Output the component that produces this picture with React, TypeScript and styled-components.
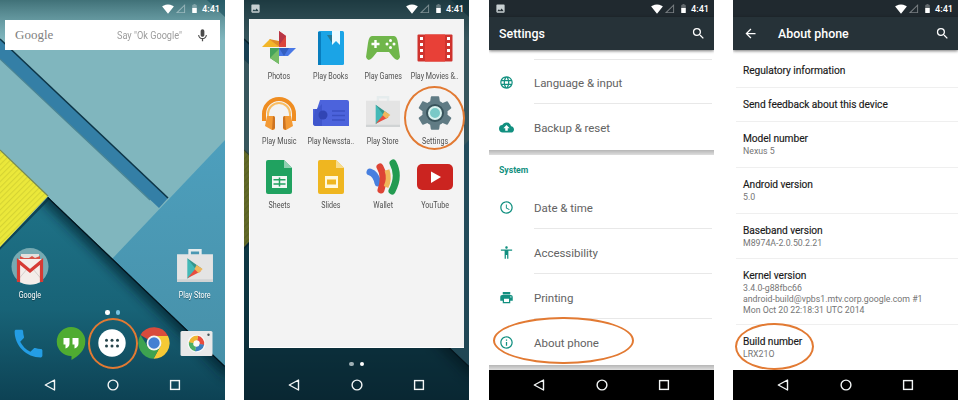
import React from "react";
import styled, { createGlobalStyle } from "styled-components";
import {
  MdSearch, MdLanguage, MdBackup, MdAccessTime, MdAccessibility, MdPrint,
  MdInfoOutline, MdArrowBack, MdSignalWifi4Bar, MdSignalCellularNull,
  MdBattery60, MdPhoto, MdMic, MdSettings, MdPhone,
} from "react-icons/md";

const Global = createGlobalStyle`
  * { box-sizing: border-box; }
  body { margin: 0; background: #fff; font-family: Roboto, "Liberation Sans", sans-serif; }
  svg { display: block; }
`;

const Page = styled.main`
  display: grid;
  grid-template-columns: 244px 245px 244px 225px;
  width: 960px;
  height: 400px;
  overflow: hidden;
`;

const Screen = styled.section<{ $bg?: string }>`
  position: relative;
  isolation: isolate;
  display: flex;
  flex-direction: column;
  width: 225px;
  height: 400px;
  overflow: hidden;
  background: ${(p) => p.$bg || "#fff"};
`;

const Backdrop = styled.svg`
  position: absolute;
  inset: 0;
  z-index: -1;
`;

const Ring = styled.div<{ $x: number; $y: number; $w: number; $h: number }>`
  position: absolute;
  left: ${(p) => p.$x}px;
  top: ${(p) => p.$y}px;
  width: ${(p) => p.$w}px;
  height: ${(p) => p.$h}px;
  border: 2px solid #e27a33;
  border-radius: 50%;
`;

const StatusRow = styled.header<{ $bg?: string }>`
  flex: none;
  display: flex;
  align-items: center;
  height: 17px;
  padding: 0 5px 0 6px;
  color: #fff;
  background: ${(p) => p.$bg || "transparent"};
`;
const StatusIcons = styled.div`
  display: flex;
  align-items: center;
  margin-left: auto;
`;
const Faint = styled.span`
  opacity: 0.4;
  margin: 0 3px 0 1px;
`;
const Clock = styled.span`
  margin-left: 2px;
  font-size: 9.2px;
  line-height: 17px;
  font-weight: 500;
  width: 18px;
  text-align: right;
  white-space: nowrap;
`;

function Status({ bg, photo }: { bg?: string; photo?: boolean }) {
  return (
    <StatusRow $bg={bg}>
      {photo && <MdPhoto size={11} color="#c8d0d2" />}
      <StatusIcons>
        <MdSignalWifi4Bar size={12} />
        <Faint><MdSignalCellularNull size={11} /></Faint>
        <MdBattery60 size={11} />
        <Clock>4:41</Clock>
      </StatusIcons>
    </StatusRow>
  );
}

const NavRow = styled.nav<{ $bg?: string }>`
  flex: none;
  display: grid;
  grid-template-columns: repeat(3, 62.5px);
  justify-content: center;
  justify-items: center;
  align-items: center;
  height: 30px;
  margin-top: auto;
  background: ${(p) => p.$bg || "transparent"};
`;

function Nav({ bg }: { bg?: string }) {
  const line = { fill: "none", stroke: "#f3f6f6", strokeWidth: 1.4 };
  return (
    <NavRow $bg={bg}>
      <svg width="14" height="14"><path d="M11.5 2v10L2.3 7z" {...line} strokeLinejoin="round" /></svg>
      <svg width="14" height="14"><circle cx="7" cy="7" r="4.9" {...line} /></svg>
      <svg width="14" height="14"><rect x="2.6" y="2.6" width="8.8" height="8.8" {...line} /></svg>
    </NavRow>
  );
}

function Wallpaper({ dim }: { dim?: boolean }) {
  const id = dim ? "b" : "a";
  return (
    <Backdrop width="225" height="400" viewBox="0 0 225 400">
      <defs>
        <linearGradient id={"top" + id} x1="0" y1="0" x2="0" y2="1">
          <stop offset="0" stopColor="#123f45" stopOpacity=".58" />
          <stop offset="1" stopColor="#315f64" stopOpacity="0" />
        </linearGradient>
        <linearGradient id={"deep" + id} x1="0" y1="0" x2="0" y2="1">
          <stop offset="0" stopColor="#1f7388" />
          <stop offset=".55" stopColor="#186377" />
          <stop offset="1" stopColor="#0d4254" />
        </linearGradient>
        <linearGradient id={"blue" + id} x1="0" y1="0" x2="0" y2="1">
          <stop offset="0" stopColor="#4d9fbd" />
          <stop offset="1" stopColor="#4790a8" />
        </linearGradient>
        <pattern id={"stripe" + id} width="4" height="4" patternUnits="userSpaceOnUse" patternTransform="rotate(-45)">
          <rect width="4" height="4" fill="#ebe83a" />
          <rect width="4" height="1.1" fill="#d6d433" />
        </pattern>
        <filter id={"soft" + id} x="-20%" y="-20%" width="140%" height="140%">
          <feGaussianBlur stdDeviation="6" />
        </filter>
        <clipPath id={"lower" + id}><path d="M0 247L48 197L225 366V400H0z" /></clipPath>
      </defs>
      <rect width="225" height="400" fill="#80b6be" />
      <path d="M0 39L168 198L159 208L0 59z" fill="#347fa6" />
      <path d="M0 59L150 200" stroke="#4a8494" strokeWidth="1.2" />
      <path d="M0 39L168 198" stroke="#0d3547" strokeWidth="1.6" />
      <path d="M225 140V368L112 259z" fill={`url(#blue${id})`} />
      <path d="M0 247L48 197L225 366V400H0z" fill={`url(#deep${id})`} />
      <g clipPath={`url(#lower${id})`}>
        <path d="M44 193L232 373" stroke="#021c28" strokeWidth="14" opacity=".75" filter={`url(#soft${id})`} />
        <path d="M-4 251L50 196" stroke="#0a3340" strokeWidth="4" opacity=".7" />
        <path d="M48 197L225 366" stroke="#04141c" strokeWidth="2.4" />
      </g>
      <path d="M0 150L48 196L0 247z" fill={`url(#stripe${id})`} />
      <path d="M0 150L48 196" stroke="#788b52" strokeWidth="1.2" />
      <rect width="225" height="40" fill={`url(#top${id})`} />
      <path d="M207 0H225V17z" fill="#174d5b" opacity=".6" />
      {dim && <rect width="225" height="400" fill="#06151c" opacity=".6" />}
    </Backdrop>
  );
}

/* Home screen */
const SearchWidget = styled.div`
  flex: none;
  display: flex;
  align-items: center;
  height: 30px;
  margin: 3px 5px 0;
  padding: 0 10px;
  background: #fff;
`;
const Wordmark = styled.span`
  width: 39px;
  font: 13px "Liberation Serif", serif;
  color: #808080;
`;
const Hint = styled.span`
  width: 66px;
  margin: 0 12px 0 auto;
  font-size: 11.2px;
  color: #9c9c9c;
  white-space: nowrap;
  transform: scaleX(0.82);
  transform-origin: left;
`;
const HomeShortcuts = styled.div`
  display: flex;
  justify-content: space-between;
  margin-top: 196px;
  padding: 0 5px;
`;
const Shortcut = styled.div`
  display: flex;
  flex-direction: column;
  align-items: center;
  width: 50px;
  height: 56px;
  padding-top: 2px;
  gap: 4px;
`;
const AppLabel = styled.span<{ $light?: boolean }>`
  font-size: 8.8px;
  line-height: 10px;
  white-space: nowrap;
  color: ${(p) => (p.$light ? "#fff" : "#505050")};
  text-shadow: ${(p) => (p.$light ? "0 1px 1px #0006" : "none")};
  transform: scaleX(0.81);
`;
const Dots = styled.div<{ $top: number }>`
  display: flex;
  flex: none;
  justify-content: center;
  gap: 6px;
  margin-top: ${(p) => p.$top}px;
`;
const Dot = styled.i<{ $c: string }>`
  width: 4.5px;
  height: 4.5px;
  border-radius: 50%;
  background: ${(p) => p.$c};
`;
const Dock = styled.div`
  display: grid;
  grid-template-columns: repeat(5, 41.8px);
  justify-content: center;
  justify-items: center;
  align-items: center;
  height: 36px;
  margin-top: 10px;
`;

function Bag({ size = 37 }: { size?: number }) {
  return (
    <svg width={size} height={size} viewBox="0 0 37 37">
      <path d="M12 7.500V1h13v6.500h-2.500V3.500h-8v4z" fill="#e5eced" />
      <path d="M1 6h35V33H1z" fill="#e4e4e4" />
      <path d="M1 30.500h35v2.500H1z" fill="#d0d3d4" />
      <path d="M11 10L23 21L11 30z" fill="#43b9b7" />
      <path d="M11 10l14 10-4 3z" fill="#35958d" />
      <path d="M11 29.500L20 19l4 4-13 6.500z" fill="#e94d3f" />
      <path d="M20 16.500l6 4-4 4-4-4z" fill="#f0b75c" />
    </svg>
  );
}
function GmailFolder() {
  return (
    <svg width="38" height="38" viewBox="0 0 38 38">
      <circle cx="19" cy="18.500" r="18.500" fill="#77aab2" />
      <path d="M10 6h18v9H10z" fill="#e5e0dc" />
      <path d="M9 8l4 2h5l3-2 3 2 5-2v6H9z" fill="#d85246" />
      <path d="M6 13q0-2 2-2h22q2 0 2 2v20q-13 7-26 0z" fill="#f3eeea" />
      <path d="M6 33l10-12M32 33L22 21" stroke="#d5d0cc" strokeWidth="1" />
      <path d="M7.500 34V13.500L19 23L30.500 13.500V34" fill="none" stroke="#d63b34" strokeWidth="3.2" />
    </svg>
  );
}
function Hangouts() {
  return (
    <svg width="30" height="35" viewBox="0 0 30 35">
      <path d="M15 1a14.300 14.300 0 0 1 14.300 14.300C29.300 24 23 30 15.500 34v-4A14.500 14.500 0 0 1 15 1z" fill="#4fac31" />
      <path d="M7.500 12h6v5.500q0 3.500-4 5v-4h-2zM16.500 12h6v5.500q0 3.500-4 5v-4h-2z" fill="#fff" />
    </svg>
  );
}
function Launcher() {
  return (
    <svg width="28" height="28" viewBox="0 0 28 28">
      <circle cx="14" cy="14" r="13.700" fill="#fff" />
      {[8.500, 14, 19.500].map((x) => [11.300, 17].map((y) => <circle key={x + "-" + y} cx={x} cy={y} r="1.500" fill="#26444a" />))}
    </svg>
  );
}
function Chrome() {
  return (
    <svg width="32" height="32" viewBox="-16 -16 32 32">
      <path d="M0 0L-13.500-8A15.700 15.700 0 0 1 14-7H0z" fill="#d94b3c" />
      <path d="M0-7H14A15.700 15.700 0 0 1-.5 15.700L6.500 3z" fill="#f6c935" />
      <path d="M-13.500-8A15.700 15.700 0 0 0-.5 15.700L6.500 3-6 4z" fill="#3da250" />
      <circle r="7.400" fill="#f5f5f5" /><circle r="5.700" fill="#447fd2" />
    </svg>
  );
}
function Camera() {
  const colors = ["#e84c3d", "#3a7fc0", "#4caf65", "#f0b732"];
  return (
    <svg width="33" height="27" viewBox="0 0 33 27">
      <rect x=".5" y="1" width="32" height="25" rx="1.500" fill="#e9e9e9" />
      <circle cx="16.500" cy="13.500" r="9" fill="#f9f9f9" />
      {colors.map((c, i) => (
        <circle key={c} cx="16.500" cy="13.500" r="5.500" fill="none" stroke={c} strokeWidth="4.500"
          strokeDasharray="8.640 25.920" transform={`rotate(${i * 90 - 80} 16.500 13.500)`} />
      ))}
      <circle cx="28.500" cy="4.800" r="1.200" fill="#45545a" />
    </svg>
  );
}

function Home() {
  return (
    <Screen>
      <Wallpaper />
      <Status />
      <SearchWidget>
        <Wordmark>Google</Wordmark>
        <Hint>Say "Ok Google"</Hint>
        <MdMic size={15} color="#4a4a4a" />
      </SearchWidget>
      <HomeShortcuts>
        <Shortcut><GmailFolder /><AppLabel $light>Google</AppLabel></Shortcut>
        <Shortcut><Bag size={38} /><AppLabel $light>Play Store</AppLabel></Shortcut>
      </HomeShortcuts>
      <Dots $top={8}><Dot $c="#fff" /><Dot $c="#78c3e1" /></Dots>
      <Dock>
        <MdPhone size={37} color="#249de4" />
        <Hangouts />
        <Launcher />
        <Chrome />
        <Camera />
      </Dock>
      <Nav />
      <Ring $x={87.5} $y={318} $w={50} $h={50.5} />
    </Screen>
  );
}

/* App drawer */
const Drawer = styled.div`
  flex: none;
  display: grid;
  grid-template-columns: repeat(4, 52px);
  grid-auto-rows: 64.5px;
  justify-content: center;
  height: 329px;
  margin: 2px 5px 0;
  padding-top: 11px;
  background: #f3f3f3;
  border: solid #fff;
  border-width: 0 0 1px 1px;
`;
const AppCell = styled.div`
  display: flex;
  flex-direction: column;
  align-items: center;
  gap: 5px;
`;

const icons: Record<string, React.ReactNode> = {
  Photos: <>
    <path d="M18 1l7 5v11h-7z" fill="#dc463c" /><path d="M18 1l7 5-7 9z" fill="#b83646" />
    <path d="M1 17L9 9l9 8z" fill="#f2b528" /><path d="M8 9l10 2v6z" fill="#e08d25" />
    <path d="M18 18h17l-8 8H18z" fill="#4978e6" /><path d="M18 18h10l-5 8z" fill="#345fc1" />
    <path d="M9 18h9v16l-9-6z" fill="#46a35b" /><path d="M9 28l9-9v15z" fill="#78bd67" />
  </>,
  "Play Books": <>
    <rect x="5" y="1" width="26" height="34" rx="1.500" fill="#1ba4e6" /><path d="M5 2h3v33H5z" fill="#087dbd" />
    <path d="M19 1h8v14l-4-4-4 4z" fill="#eefaff" /><path d="M14 5h5v8z" fill="#267996" />
  </>,
  "Play Games": <>
    <path d="M7 6h22q3 0 4 7l2 14q-2 6-7 0l-4-5H12l-4 5q-5 6-7 0L3 13q1-7 4-7z" fill="#70b64b" />
    <path d="M10.500 10v8M6.500 14h8" stroke="#fff" strokeWidth="2.400" />
    <circle cx="25.500" cy="10.500" r="1.500" fill="#fff" /><circle cx="25.500" cy="17.500" r="1.500" fill="#fff" />
    <circle cx="22" cy="14" r="1.500" fill="#fff" /><circle cx="29" cy="14" r="1.500" fill="#fff" />
  </>,
  "Play Movies &..": <>
    <rect x=".5" y="4.500" width="35" height="27" rx="1" fill="#cf332e" /><path d="M8 4.500h20v27H8z" fill="#e84037" />
    {[7, 13, 19, 25].map((y) => <path key={y} d={`M3 ${y}h3v3h-3zM30 ${y}h3v3h-3z`} fill="#fff" />)}
  </>,
  "Play Music": <>
    <path d="M3 26v-7a15 15 0 0 1 30 0v7" fill="none" stroke="#ef8d21" strokeWidth="4" />
    <path d="M7 23v-4a11 11 0 0 1 22 0v4" fill="none" stroke="#f9bd62" strokeWidth="2" />
    <path d="M6 21h6q2 0 2 2v10q0 2-3 2L4 31zM30 21h-6q-2 0-2 2v10q0 2 3 2l7-4z" fill="#f39a35" />
    <path d="M12 21q2 0 2 2v10l-3 2zM24 21q-2 0-2 2v10l3 2z" fill="#cd7422" />
  </>,
  "Play Newssta..": <>
    <path d="M7 5h27q2 0 2 2v24H3q-3 0-3-3V14h4z" fill="#4c63dc" />
    <path d="M2 14h2l5-5v22H3q-3 0-3-3z" fill="#3f56cc" />
    <circle cx="10" cy="20" r="4.500" fill="#3145b4" /><path d="M19 16h13M19 20.500h13M19 25h13" stroke="#3a50c2" strokeWidth="1.700" />
  </>,
  Sheets: <>
    <path d="M5 3q0-2 2-2h16l8 8v24q0 2-2 2H7q-2 0-2-2z" fill="#20a260" /><path d="M23 1l8 8h-8z" fill="#8ed0b1" />
    <path d="M11 17h15v12H11z" fill="#f2f7f4" /><path d="M12.500 20.700h12M12.500 25h12M18.500 18.500v9" stroke="#20a260" strokeWidth="1.500" />
  </>,
  Slides: <>
    <path d="M5 3q0-2 2-2h16l8 8v24q0 2-2 2H7q-2 0-2-2z" fill="#efb620" /><path d="M23 1l8 8h-8z" fill="#f8dc8c" />
    <path d="M12 17h13v12H12z" fill="#fff8dc" /><path d="M14 20.500h9v5h-9z" fill="#efb620" />
  </>,
  Wallet: <>
    <g fill="none" strokeLinecap="round">
      <path d="M5 13q6 2 8 11" stroke="#477fdf" strokeWidth="7" /><path d="M15 8q6 10 1 23" stroke="#de4435" strokeWidth="7" />
      <path d="M22 11q3 9-1 17" stroke="#f0b75a" strokeWidth="5" strokeLinecap="butt" /><path d="M28 4q7 13-1 28" stroke="#239b51" strokeWidth="7" />
    </g>
  </>,
  YouTube: <>
    <rect x="0" y="5" width="36" height="26" rx="5" fill="#cb2420" /><path d="M14 12.500l10 5.500-10 6z" fill="#fff" />
  </>,
};
const apps = ["Photos", "Play Books", "Play Games", "Play Movies &..", "Play Music", "Play Newssta..", "Play Store", "Settings", "Sheets", "Slides", "Wallet", "YouTube"];

function AppIcon({ name }: { name: string }) {
  if (name === "Play Store") return <Bag size={36} />;
  if (name === "Settings")
    return (
      <svg width="36" height="36" viewBox="0 0 36 36">
        <MdSettings x="-3" y="-3" size={42} color="#607b84" />
        <circle cx="18" cy="18" r="9" fill="#38535b" /><circle cx="18" cy="18" r="6" fill="#79c9c7" stroke="#d9f2ef" strokeWidth="2" />
      </svg>
    );
  return <svg width="36" height="36" viewBox="0 0 36 36">{icons[name]}</svg>;
}

function AppDrawer() {
  return (
    <Screen>
      <Wallpaper dim />
      <Status photo />
      <Drawer>
        {apps.map((name) => (
          <AppCell key={name}><AppIcon name={name} /><AppLabel>{name}</AppLabel></AppCell>
        ))}
      </Drawer>
      <Dots $top={13.5}><Dot $c="#9fb0b5" /><Dot $c="#fff" /></Dots>
      <Nav />
      <Ring $x={160} $y={85.5} $w={61} $h={64} />
    </Screen>
  );
}

/* Settings screens */
const TitleBar = styled.div`
  flex: none;
  display: flex;
  align-items: center;
  height: 33px;
  padding: 0 8px 0 10px;
  color: #fff;
  background: #263238;
  box-shadow: 0 1px 3px #0008;
  z-index: 1;
`;
const Title = styled.h1<{ $indent?: number }>`
  flex: 1;
  margin: 0 0 0 ${(p) => p.$indent || 0}px;
  font-size: 12.4px;
  font-weight: 500;
`;
const ListRow = styled.div`
  flex: none;
  display: grid;
  grid-template-columns: 35px 1fr;
  height: 45px;
  padding: 0 2px 0 10px;
  color: #129080;
  svg { align-self: center; }
`;
const RowText = styled.span<{ $line?: boolean }>`
  height: 44px;
  border-bottom: 1px solid ${(p) => (p.$line ? "#e8e8e8" : "transparent")};
  font-size: 11.5px;
  line-height: 46px;
  letter-spacing: -0.04px;
  color: #636363;
`;
const LeadingRule = styled.div`
  flex: none;
  height: 10px;
  margin: 0 2px 0 45px;
  border-bottom: 1px solid #e8e8e8;
`;
const SectionGap = styled.div`
  flex: none;
  height: 5px;
  background: linear-gradient(#b6b6b6, #dedede);
`;
const SectionTitle = styled.h2`
  flex: none;
  height: 30px;
  margin: 0;
  padding-left: 10px;
  font-size: 8.7px;
  line-height: 31px;
  font-weight: 700;
  color: #129080;
`;

function Settings() {
  return (
    <Screen>
      <Status bg="#20292f" photo />
      <TitleBar><Title>Settings</Title><MdSearch size={15} /></TitleBar>
      <LeadingRule />
      <ListRow><MdLanguage size={15} /><RowText $line>Language & input</RowText></ListRow>
      <ListRow><MdBackup size={15} /><RowText>Backup & reset</RowText></ListRow>
      <SectionGap />
      <SectionTitle>System</SectionTitle>
      <ListRow><MdAccessTime size={15} /><RowText $line>Date & time</RowText></ListRow>
      <ListRow><MdAccessibility size={15} /><RowText $line>Accessibility</RowText></ListRow>
      <ListRow><MdPrint size={15} /><RowText $line>Printing</RowText></ListRow>
      <ListRow><MdInfoOutline size={15} /><RowText>About phone</RowText></ListRow>
      <SectionGap />
      <Nav bg="#000" />
      <Ring $x={4} $y={316.5} $w={141} $h={47.5} />
    </Screen>
  );
}

const InfoRow = styled.div<{ $h: number }>`
  flex: none;
  height: ${(p) => p.$h}px;
  margin-left: 3px;
  padding: 10px 0 0 7px;
  border-bottom: 1px solid #efefef;
  &:last-of-type { border-color: transparent; }
`;
const InfoTitle = styled.div`
  font-size: 10.2px;
  line-height: 14px;
  letter-spacing: -0.06px;
  color: #1a1a1a;
  -webkit-text-stroke: 0.15px #1a1a1a;
  white-space: nowrap;
`;
const InfoValue = styled.div`
  font-size: 8.75px;
  line-height: 10.6px;
  color: #757575;
  white-space: nowrap;
`;
const InfoList = styled.div`
  flex: none;
  height: 320px;
  padding-top: 4px;
  overflow: hidden;
`;
const info: { title: string; lines: string[]; h: number }[] = [
  { title: "Regulatory information", lines: [], h: 34 },
  { title: "Send feedback about this device", lines: [], h: 34 },
  { title: "Model number", lines: ["Nexus 5"], h: 46 },
  { title: "Android version", lines: ["5.0"], h: 45.700 },
  { title: "Baseband version", lines: ["M8974A-2.0.50.2.21"], h: 45.700 },
  { title: "Kernel version", lines: ["3.4.0-g88fbc66", "android-build@vpbs1.mtv.corp.google.com #1", "Mon Oct 20 22:18:31 UTC 2014"], h: 66 },
  { title: "Build number", lines: ["LRX21O"], h: 46 },
];

function AboutPhone() {
  return (
    <Screen>
      <Status bg="#20292f" />
      <TitleBar><MdArrowBack size={15} /><Title $indent={20}>About phone</Title><MdSearch size={15} /></TitleBar>
      <InfoList>
        {info.map((row) => (
          <InfoRow key={row.title} $h={row.h}>
            <InfoTitle>{row.title}</InfoTitle>
            {row.lines.map((line) => <InfoValue key={line}>{line}</InfoValue>)}
          </InfoRow>
        ))}
      </InfoList>
      <Nav bg="#000" />
      <Ring $x={1.5} $y={322.5} $w={79} $h={47.5} />
    </Screen>
  );
}

export default function App() {
  return (
    <Page>
      <Global />
      <Home />
      <AppDrawer />
      <Settings />
      <AboutPhone />
    </Page>
  );
}
